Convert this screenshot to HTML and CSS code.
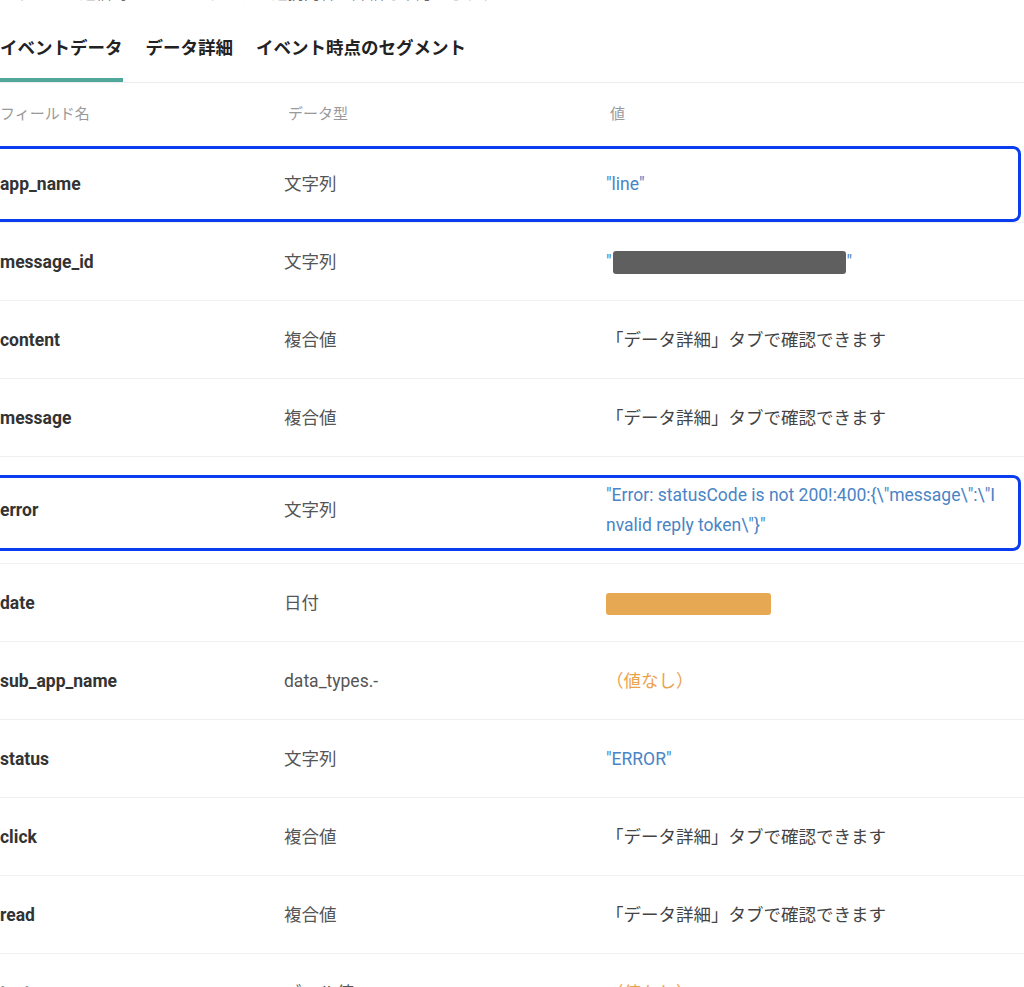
FILE: index.html
```html
<!DOCTYPE html>
<html lang="ja">
<head>
    <meta charset="UTF-8">
    <meta name="viewport" content="width=device-width, initial-scale=1.0">
    <title>イベントデータ</title>
    <link rel="stylesheet" href="styles.css">
</head>
<body>
    <p class="lead">メッセージ送信時のイベントデータと連携内容の詳細を確認できます</p>

    <div class="tabs">
        <div class="tab active">イベントデータ</div>
        <div class="tab">データ詳細</div>
        <div class="tab">イベント時点のセグメント</div>
    </div>

    <div class="field-table">
        <div class="row head">
            <div>フィールド名</div>
            <div>データ型</div>
            <div>値</div>
        </div>

        <div class="row marked">
            <div class="name">app_name</div>
            <div class="type">文字列</div>
            <div class="value str">"line"</div>
        </div>
        <div class="row">
            <div class="name">message_id</div>
            <div class="type">文字列</div>
            <div class="value str">"<span class="redact"></span>"</div>
        </div>
        <div class="row">
            <div class="name">content</div>
            <div class="type">複合値</div>
            <div class="value">「データ詳細」タブで確認できます</div>
        </div>
        <div class="row">
            <div class="name">message</div>
            <div class="type">複合値</div>
            <div class="value">「データ詳細」タブで確認できます</div>
        </div>
        <div class="row marked tall">
            <div class="name">error</div>
            <div class="type">文字列</div>
            <div class="value str">"Error: statusCode is not 200!:400:{\"message\":\"Invalid reply token\"}"</div>
        </div>
        <div class="row">
            <div class="name">date</div>
            <div class="type">日付</div>
            <div class="value"><span class="date-bar"></span></div>
        </div>
        <div class="row">
            <div class="name">sub_app_name</div>
            <div class="type">data_types.-</div>
            <div class="value empty">（値なし）</div>
        </div>
        <div class="row">
            <div class="name">status</div>
            <div class="type">文字列</div>
            <div class="value str">"ERROR"</div>
        </div>
        <div class="row">
            <div class="name">click</div>
            <div class="type">複合値</div>
            <div class="value">「データ詳細」タブで確認できます</div>
        </div>
        <div class="row">
            <div class="name">read</div>
            <div class="type">複合値</div>
            <div class="value">「データ詳細」タブで確認できます</div>
        </div>
        <div class="row">
            <div class="name">test</div>
            <div class="type">ブール値</div>
            <div class="value empty">（値なし）</div>
        </div>
    </div>
</body>
</html>
```

FILE: styles.css
```css
body {
    margin: 0;
    font-family: Roboto, "Noto Sans CJK JP", sans-serif;
    color: #333;
    background: #fff;
    overflow: hidden;
}
.lead {
    margin: -18px 0 0;
    font-size: 16px;
    line-height: 24px;
    color: #666;
}
.tabs {
    display: flex;
    gap: 23px;
    margin-top: 30px;
    border-bottom: 1px solid #ececec;
}
.tab {
    font-size: 17.5px;
    font-weight: bold;
    line-height: 24px;
    color: #222;
    padding-bottom: 18px;
    border-bottom: 4px solid transparent;
}
.tab.active {
    border-bottom-color: #4fa89a;
}
.row {
    display: grid;
    grid-template-columns: 284px 322px 1fr;
    align-items: center;
    min-height: 77px;
    border-bottom: 1px solid #f0f0f0;
    font-size: 17.5px;
    line-height: 30px;
}
.row.head {
    min-height: 62px;
    border-bottom: none;
    font-size: 15px;
    color: #999;
}
.row.head div + div {
    padding-left: 4px;
}
.row.marked {
    position: relative;
}
.row.marked::after {
    content: '';
    position: absolute;
    left: -12px;
    right: 3px;
    top: 1px;
    bottom: 0;
    border: 3px solid #0a3df0;
    border-radius: 8px;
}
.row.tall {
    min-height: 0;
    padding: 23px 0;
}
.row.tall::after {
    top: 18px;
    bottom: 12px;
}
.name {
    font-weight: bold;
    color: #333;
}
.type {
    color: #555;
}
.value {
    color: #444;
    padding-right: 23px;
    word-break: break-all;
}
.value.str {
    color: #4a84c6;
}
.value.empty {
    color: #eba24c;
}
.redact {
    display: inline-block;
    width: 233px;
    height: 23px;
    background: #5f5f5f;
    border-radius: 3px;
    vertical-align: middle;
    margin: 0 1px;
}
.date-bar {
    display: inline-block;
    width: 165px;
    height: 22px;
    background: #e7a853;
    border-radius: 3px;
    vertical-align: middle;
}
```
